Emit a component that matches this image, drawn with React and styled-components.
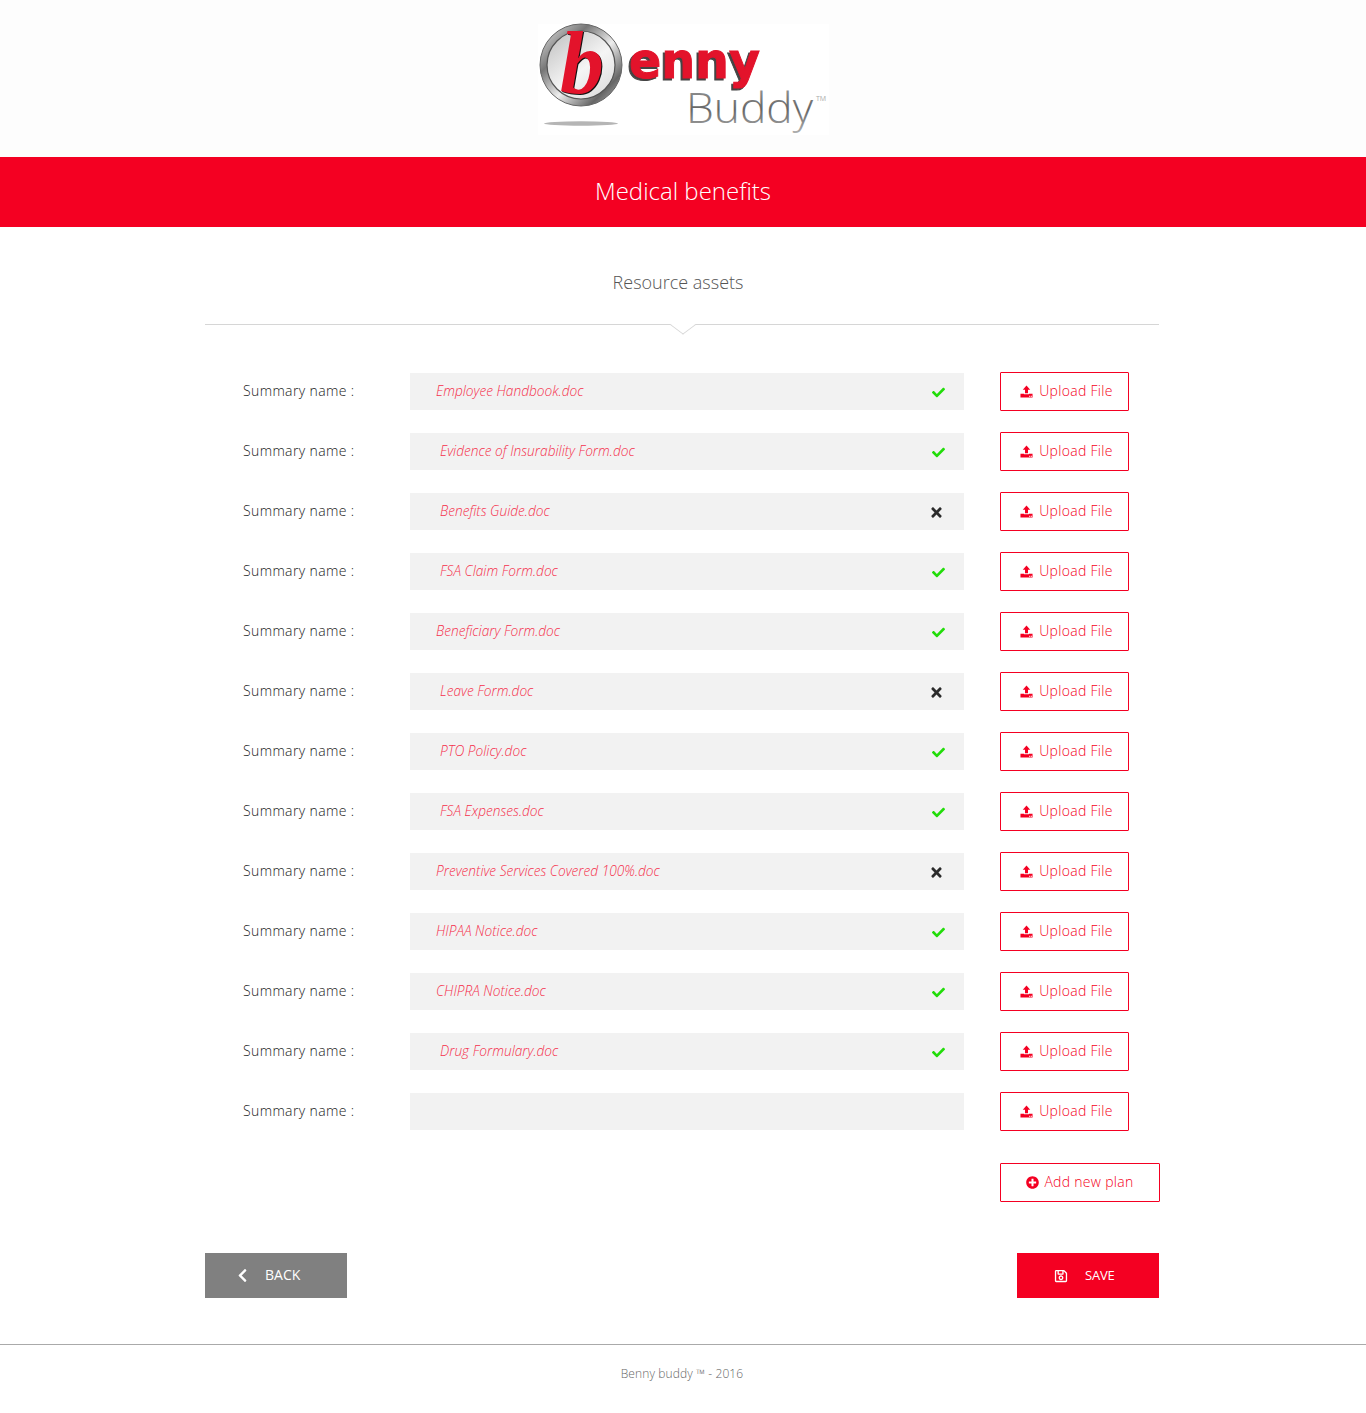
import React from "react";
import styled, { createGlobalStyle } from "styled-components";
import { FaCheck, FaTimes, FaPlusCircle, FaRegSave, FaChevronLeft } from "react-icons/fa";

const RED = "#f40022";

const GlobalStyle = createGlobalStyle`
  html, body {
    margin: 0;
    padding: 0;
    background: #fff;
    font-family: "Open Sans", "Liberation Sans", sans-serif;
  }
  * { box-sizing: border-box; }
`;

const files = [
  { name: "Employee Handbook.doc", ok: true, indent: 26 },
  { name: "Evidence of Insurability Form.doc", ok: true, indent: 30 },
  { name: "Benefits Guide.doc", ok: false, indent: 30 },
  { name: "FSA Claim Form.doc", ok: true, indent: 30 },
  { name: "Beneficiary Form.doc", ok: true, indent: 26 },
  { name: "Leave Form.doc", ok: false, indent: 30 },
  { name: "PTO Policy.doc", ok: true, indent: 30 },
  { name: "FSA Expenses.doc", ok: true, indent: 30 },
  { name: "Preventive Services Covered 100%.doc", ok: false, indent: 26 },
  { name: "HIPAA Notice.doc", ok: true, indent: 26 },
  { name: "CHIPRA Notice.doc", ok: true, indent: 26 },
  { name: "Drug Formulary.doc", ok: true, indent: 30 },
  { name: "", indent: 26 },
];

function Logo() {
  return (
    <svg width="291" height="111" viewBox="0 0 291 111">
      <defs>
        <linearGradient id="ring" x1="0" y1="0" x2="1" y2="1">
          <stop offset="0" stopColor="#efefef" />
          <stop offset="0.3" stopColor="#777" />
          <stop offset="0.55" stopColor="#eee" />
          <stop offset="0.8" stopColor="#666" />
          <stop offset="1" stopColor="#ccc" />
        </linearGradient>
        <linearGradient id="disc" x1="0" y1="0" x2="0.8" y2="1">
          <stop offset="0" stopColor="#bdbdbd" />
          <stop offset="0.6" stopColor="#f5f5f5" />
          <stop offset="1" stopColor="#dedede" />
        </linearGradient>
        <linearGradient id="buddy" x1="0" y1="0" x2="0" y2="1">
          <stop offset="0" stopColor="#aaa" />
          <stop offset="0.55" stopColor="#666" />
          <stop offset="1" stopColor="#b5b5b5" />
        </linearGradient>
      </defs>
      <rect width="291" height="111" fill="#fff" />
      <circle cx="43" cy="41" r="41" fill="url(#ring)" stroke="#666" strokeWidth="1" />
      <circle cx="43" cy="41" r="34" fill="url(#disc)" stroke="#555" strokeWidth="1.2" />
      <LogoMark x="44" y="69" textAnchor="middle">b</LogoMark>
      <ellipse cx="43" cy="99.5" rx="37" ry="2.2" fill="#b5b5b5" />
      <LogoName x="91" y="54" textLength="131" lengthAdjust="spacingAndGlyphs">enny</LogoName>
      <text x="148" y="99" textLength="127" lengthAdjust="spacingAndGlyphs" fontFamily="Open Sans" fontWeight="300" fontSize="42" fill="url(#buddy)">Buddy</text>
      <text x="278" y="77" fontFamily="Open Sans" fontSize="7" fill="#aaa">TM</text>
    </svg>
  );
}

function UploadIcon() {
  return (
    <svg width="13" height="13" viewBox="0 0 14 14" fill="currentColor">
      <path d="M7 0.5 L11 5 H8.6 V9 H5.4 V5 H3 Z" />
      <path d="M0.5 9.5 H4.4 V10 H9.6 V9.5 H13.5 V13.5 H0.5 Z" />
      <rect x="9.8" y="11.6" width="1.2" height="1.1" fill="#fff" />
      <rect x="11.6" y="11.6" width="1.2" height="1.1" fill="#fff" />
    </svg>
  );
}

export default function App() {
  return (
    <>
      <GlobalStyle />
      <Header>
        <Logo />
      </Header>
      <Banner>Medical benefits</Banner>
      <Content>
        <Subtitle>Resource assets</Subtitle>
        <Divider />
        <Rows>
          {files.map((f, i) => (
            <Row key={i}>
              <Label>Summary name :</Label>
              <Field $indent={f.indent}>
                <FileName>{f.name}</FileName>
                {f.name && <Status $ok={f.ok}>{f.ok ? <FaCheck /> : <FaTimes />}</Status>}
              </Field>
              <OutlineButton>
                <UploadIcon />
                <ButtonText>Upload File</ButtonText>
              </OutlineButton>
            </Row>
          ))}
        </Rows>
        <AddRow>
          <AddButton>
            <FaPlusCircle />
            <ButtonText>Add new plan</ButtonText>
          </AddButton>
        </AddRow>
        <Actions>
          <BackButton>
            <FaChevronLeft />
            <ButtonText>BACK</ButtonText>
          </BackButton>
          <SaveButton>
            <FaRegSave />
            <ButtonText>SAVE</ButtonText>
          </SaveButton>
        </Actions>
      </Content>
      <Footer>Benny buddy ™ - 2016</Footer>
    </>
  );
}

const LogoMark = styled.text`
  font-family: "Liberation Serif", serif;
  font-style: italic;
  font-weight: 700;
  font-size: 88px;
  fill: #e3132b;
  filter: drop-shadow(1.5px 1.5px 0 #111);
`;

const LogoName = styled.text`
  font-family: "DejaVu Sans", sans-serif;
  font-weight: 700;
  font-size: 50px;
  fill: #e3132b;
  stroke: #e3132b;
  stroke-width: 1px;
  filter: drop-shadow(-2px 2px 0 #444);
`;

const Header = styled.header`
  height: 157px;
  background: #fdfdfd;
  display: flex;
  justify-content: center;
  padding-top: 24px;

  svg {
    display: block;
    overflow: visible;
  }
`;

const Banner = styled.h1`
  margin: 0;
  height: 70px;
  background: ${RED};
  color: #fff;
  font-size: 24px;
  font-weight: 300;
  line-height: 68px;
  text-align: center;
`;

const Content = styled.main`
  width: 954px;
  margin-left: 205px;
`;

const Subtitle = styled.h2`
  margin: 0;
  padding: 42px 8px 0 0;
  height: 97px;
  font-size: 18px;
  font-weight: 300;
  line-height: 26px;
  color: #555;
  text-align: center;
`;

const Divider = styled.div`
  position: relative;
  height: 1px;
  background: #d6d6d6;

  &::after {
    content: "";
    position: absolute;
    left: 468.5px;
    top: -8px;
    width: 17px;
    height: 17px;
    background: #fff;
    border-right: 1px solid #d6d6d6;
    border-bottom: 1px solid #d6d6d6;
    transform: scaleY(0.75) rotate(45deg);
  }
`;

const Rows = styled.div`
  display: flex;
  flex-direction: column;
  gap: 21px;
  padding: 47px 0 0 38px;
`;

const Row = styled.div`
  display: flex;
  align-items: center;
  height: 39px;
`;

const Label = styled.span`
  width: 167px;
  font-size: 14px;
  font-weight: 300;
  color: #222;
  line-height: 37px;
  height: 39px;
  letter-spacing: 0.37px;
`;

const Field = styled.div`
  width: 554px;
  height: 37px;
  margin-right: 36px;
  background: #f2f2f2;
  display: flex;
  align-items: center;
  justify-content: space-between;
  padding: 0 19px 0 ${(p) => p.$indent}px;
`;

const FileName = styled.span`
  position: relative;
  top: -1px;
  font-size: 13.7px;
  font-weight: 300;
  font-style: italic;
  color: #f5304c;
`;

const Status = styled.span`
  display: flex;
  font-size: ${(p) => (p.$ok ? "13px" : "15px")};
  margin-top: 2px;
  color: ${(p) => (p.$ok ? "#22dd0a" : "#2b2b2b")};
  margin-right: ${(p) => (p.$ok ? 0 : "1px")};
`;

const ButtonText = styled.span`
  position: relative;
  top: -1px;
`;

const OutlineButton = styled.button`
  width: 129px;
  height: 39px;
  padding: 0 0 0 4px;
  border: 1px solid ${RED};
  border-radius: 1px;
  background: #fff;
  color: ${RED};
  font-family: inherit;
  font-size: 14px;
  font-weight: 300;
  letter-spacing: 0.3px;
  display: flex;
  align-items: center;
  justify-content: center;
  gap: 6px;
`;

const AddRow = styled.div`
  display: flex;
  justify-content: flex-end;
  margin-top: 32px;
  margin-right: -1px;
`;

const AddButton = styled(OutlineButton)`
  width: 160px;
  padding: 0;
  gap: 5px;

  svg {
    font-size: 13px;
  }
`;

const Actions = styled.div`
  display: flex;
  justify-content: space-between;
  margin-top: 51px;
`;

const FilledButton = styled.button`
  width: 142px;
  height: 45px;
  border: 0;
  color: #fff;
  font-family: inherit;
  font-size: 14px;
  display: flex;
  align-items: center;
`;

const BackButton = styled(FilledButton)`
  background: #808080;
  padding: 0 0 0 30px;
  gap: 15px;
  font-weight: 400;

  svg {
    font-size: 15px;
  }
`;

const SaveButton = styled(FilledButton)`
  background: ${RED};
  padding: 0 0 0 37px;
  gap: 17px;
  font-size: 13px;
  font-weight: 400;
  letter-spacing: -0.2px;

  svg {
    font-size: 14px;
  }
`;

const Footer = styled.footer`
  margin-top: 46px;
  height: 69px;
  border-top: 1px solid #aaa;
  padding: 20px 2px 0 0;
  font-size: 12px;
  font-weight: 300;
  letter-spacing: 0.12px;
  line-height: 18px;
  color: #666;
  text-align: center;
`;
